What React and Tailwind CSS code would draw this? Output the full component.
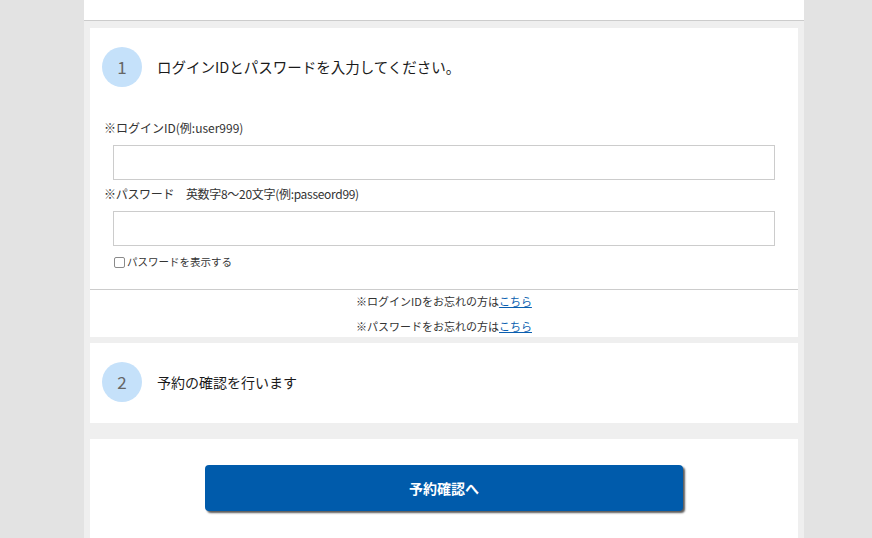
export default function App() {
  const font = { fontFamily: '"Noto Sans CJK JP", "Noto Sans", sans-serif' };
  return (
    <div className="min-h-[538px] bg-[#e3e3e3]" style={font}>
      <div className="ml-[84px] w-[720px] bg-[#efefef] min-h-[538px] pb-4">
        <div className="h-[21px] bg-white border-b border-[#cccccc]"></div>
        <div className="px-[6px] pt-[7px]">
          {/* Card 1 */}
          <div className="bg-white">
            <div className="pt-[19px] pl-[12px] flex items-center">
              <div className="w-[40px] h-[40px] rounded-full bg-[#c5e1fa] flex items-center justify-center text-[17px] text-[#666666]">1</div>
              <div className="ml-[15px] text-[14.5px] text-[#1a1a1a]">ログインIDとパスワードを入力してください。</div>
            </div>
            <div className="mt-[32px] pl-[14px] text-[12px] leading-[18px] text-[#333333]">※ログインID(例:user999)</div>
            <div className="mx-[23px] mt-[8px] h-[35px] border border-[#cccccc]"></div>
            <div className="mt-[5px] pl-[14px] text-[12px] leading-[18px] text-[#333333] whitespace-pre tracking-[-0.3px]">※パスワード　英数字8～20文字(例:passeord99)</div>
            <div className="mx-[23px] mt-[8px] h-[35px] border border-[#cccccc]"></div>
            <div className="mt-[8px] pl-[24px] flex items-center h-[16px] text-[10.5px] text-[#333333]">
              <span className="w-[11px] h-[11px] border border-[#8a8a8a] rounded-[2px] mr-[2px] bg-white"></span>
              パスワードを表示する
            </div>
            <div className="mt-[19px] border-t border-[#cccccc] text-center text-[11px] text-[#333333]">
              <p className="leading-[22px]">※ログインIDをお忘れの方は<a className="text-[#0b5fb0] underline">こちら</a></p>
              <p className="leading-[22px] mt-[3px]">※パスワードをお忘れの方は<a className="text-[#0b5fb0] underline">こちら</a></p>
            </div>
          </div>
          {/* Card 2 */}
          <div className="bg-white mt-[6px] h-[80px] pt-[19px] pl-[12px] flex items-start">
            <div className="flex items-center">
              <div className="w-[40px] h-[40px] rounded-full bg-[#c5e1fa] flex items-center justify-center text-[17px] text-[#666666]">2</div>
              <div className="ml-[15px] text-[14px] text-[#1a1a1a]">予約の確認を行います</div>
            </div>
          </div>
          {/* Card 3 */}
          <div className="bg-white mt-[16px] pt-[26px] pb-[30px] flex justify-center">
            <button className="w-[478px] h-[46px] rounded-[4px] bg-[#005bab] text-white text-[14px] font-bold shadow-[2px_2px_2px_rgba(0,0,0,0.65)]">予約確認へ</button>
          </div>
        </div>
      </div>
    </div>
  );
}
